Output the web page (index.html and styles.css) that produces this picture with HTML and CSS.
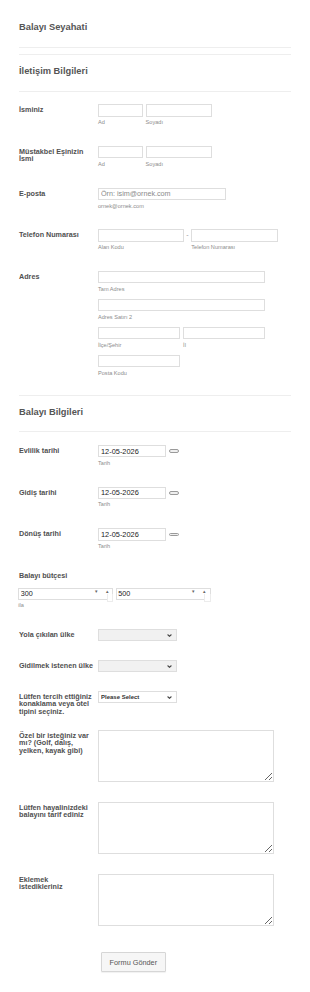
FILE: index.html
```html
<!DOCTYPE html>
<html lang="tr">
<head>
<meta charset="utf-8">
<title>Balayı Seyahati</title>
<link rel="stylesheet" href="styles.css">
</head>
<body>
<form class="form">
  <div class="page-head"><h1 class="title">Balayı Seyahati</h1></div>

  <div class="section-head first"><h2 class="sec-title">İletişim Bilgileri</h2></div>

  <div class="row">
    <label class="lbl">İsminiz</label>
    <div class="fld hrow gap-s">
      <div class="sub w45"><input class="inp" type="text"><span class="sl">Ad</span></div>
      <div class="sub w66"><input class="inp" type="text"><span class="sl">Soyadı</span></div>
    </div>
  </div>

  <div class="row">
    <label class="lbl">Müstakbel Eşinizin<br>İsmi</label>
    <div class="fld hrow gap-s">
      <div class="sub w45"><input class="inp" type="text"><span class="sl">Ad</span></div>
      <div class="sub w66"><input class="inp" type="text"><span class="sl">Soyadı</span></div>
    </div>
  </div>

  <div class="row">
    <label class="lbl">E-posta</label>
    <div class="fld">
      <div class="sub w128"><input class="inp" type="text" placeholder="Örn: isim@ornek.com"><span class="sl">ornek@ornek.com</span></div>
    </div>
  </div>

  <div class="row">
    <label class="lbl">Telefon Numarası</label>
    <div class="fld hrow">
      <div class="sub w86"><input class="inp" type="text"><span class="sl">Alan Kodu</span></div>
      <span class="dash">-</span>
      <div class="sub w86b"><input class="inp" type="text"><span class="sl">Telefon Numarası</span></div>
    </div>
  </div>

  <div class="row">
    <label class="lbl">Adres</label>
    <div class="fld vcol">
      <div class="sub w167"><input class="inp" type="text"><span class="sl">Tam Adres</span></div>
      <div class="sub w167"><input class="inp" type="text"><span class="sl">Adres Satırı 2</span></div>
      <div class="hrow gap-m">
        <div class="sub w82"><input class="inp" type="text"><span class="sl">İlçe/Şehir</span></div>
        <div class="sub w82"><input class="inp" type="text"><span class="sl">İl</span></div>
      </div>
      <div class="sub w82"><input class="inp" type="text"><span class="sl">Posta Kodu</span></div>
    </div>
  </div>

  <div class="section-head second"><h2 class="sec-title">Balayı Bilgileri</h2></div>

  <div class="row">
    <label class="lbl">Evlilik tarihi</label>
    <div class="fld">
      <div class="sub">
        <div class="date"><span class="date-box"><input class="inp val" type="text" value="12-05-2026"></span><span class="pill"></span></div>
        <span class="sl">Tarih</span>
      </div>
    </div>
  </div>

  <div class="row">
    <label class="lbl">Gidiş tarihi</label>
    <div class="fld">
      <div class="sub">
        <div class="date"><span class="date-box"><input class="inp val" type="text" value="12-05-2026"></span><span class="pill"></span></div>
        <span class="sl">Tarih</span>
      </div>
    </div>
  </div>

  <div class="row">
    <label class="lbl">Dönüş tarihi</label>
    <div class="fld">
      <div class="sub">
        <div class="date"><span class="date-box"><input class="inp val" type="text" value="12-05-2026"></span><span class="pill"></span></div>
        <span class="sl">Tarih</span>
      </div>
    </div>
  </div>

  <div class="row stack">
    <label class="lbl top">Balayı bütçesi</label>
    <div class="budget">
      <div class="hrow gap-n">
        <div class="num"><input class="num-in" type="text" value="300"><span class="arr down">▾</span><span class="arr up">▴</span><span class="knob"></span></div>
        <div class="num"><input class="num-in" type="text" value="500"><span class="arr down">▾</span><span class="arr up">▴</span><span class="knob"></span></div>
      </div>
      <span class="sl">ila</span>
    </div>
  </div>

  <div class="row">
    <label class="lbl">Yola çıkılan ülke</label>
    <div class="fld">
      <div class="selw"><select class="sel empty"><option></option></select><svg class="chev" width="5" height="3" viewBox="0 0 5 3"><path d="M0.6 0.5 L2.5 2.3 L4.4 0.5" fill="none" stroke="#444" stroke-width="1.1"/></svg></div>
    </div>
  </div>

  <div class="row">
    <label class="lbl">Gidilmek istenen ülke</label>
    <div class="fld">
      <div class="selw"><select class="sel empty"><option></option></select><svg class="chev" width="5" height="3" viewBox="0 0 5 3"><path d="M0.6 0.5 L2.5 2.3 L4.4 0.5" fill="none" stroke="#444" stroke-width="1.1"/></svg></div>
    </div>
  </div>

  <div class="row">
    <label class="lbl">Lütfen tercih ettiğiniz<br>konaklama veya otel<br>tipini seçiniz.</label>
    <div class="fld">
      <div class="selw"><select class="sel filled"><option>Please Select</option></select><svg class="chev" width="5" height="3" viewBox="0 0 5 3"><path d="M0.6 0.5 L2.5 2.3 L4.4 0.5" fill="none" stroke="#444" stroke-width="1.1"/></svg></div>
    </div>
  </div>

  <div class="row">
    <label class="lbl">Özel bir isteğiniz var<br>mı? (Golf, dalış,<br>yelken, kayak gibi)</label>
    <div class="fld"><textarea class="ta"></textarea></div>
  </div>

  <div class="row">
    <label class="lbl">Lütfen hayalinizdeki<br>balayını tarif ediniz</label>
    <div class="fld"><textarea class="ta"></textarea></div>
  </div>

  <div class="row">
    <label class="lbl">Eklemek<br>istedikleriniz</label>
    <div class="fld"><textarea class="ta"></textarea></div>
  </div>

  <div class="row">
    <span class="lbl"></span>
    <div class="fld"><button class="btn" type="button">Formu Gönder</button></div>
  </div>
</form>
</body>
</html>
```

FILE: styles.css
```css
html, body {
  margin: 0;
  padding: 0;
  background: #fff;
}

body {
  font-family: "Liberation Sans", Arial, sans-serif;
  color: #555;
}

.form {
  width: 310px;
  box-sizing: border-box;
  padding: 0 19px;
}

.page-head {
  padding: 21.5px 0 14.5px;
  border-bottom: 1px solid #eeeeee;
}

.title,
.sec-title {
  margin: 0;
  font-size: 9.3px;
  line-height: 11px;
  font-weight: bold;
  color: #555;
}

.section-head {
  border-top: 1px solid #eeeeee;
  border-bottom: 1px solid #eeeeee;
  padding: 11.2px 0 13.5px;
  margin-bottom: 3px;
}

.section-head.first {
  margin-top: 6px;
}

.section-head.second {
  margin-top: 7.5px;
}

.row {
  display: grid;
  grid-template-columns: 79px auto;
  padding: 9.7px 0;
  align-items: start;
}

.row.stack {
  display: block;
}

.lbl {
  display: block;
  font-size: 7.2px;
  line-height: 7.2px;
  font-weight: bold;
  color: #505050;
  white-space: nowrap;
  padding-top: 2px;
  margin-bottom: -4px;
}

.lbl.top {
  margin-bottom: 0;
}

.fld {
  min-width: 0;
}

.hrow {
  display: flex;
  align-items: flex-start;
}

.gap-s { gap: 2.6px; }
.gap-m { gap: 3.3px; }
.gap-n { gap: 2.4px; }

.vcol {
  display: flex;
  flex-direction: column;
  gap: 5.7px;
}

.sub {
  display: flex;
  flex-direction: column;
}

.w45 { width: 45px; }
.w66 { width: 66px; }
.w128 { width: 128px; }
.w86 { width: 85.7px; }
.w86b { width: 86.4px; }
.w167 { width: 167px; }
.w82 { width: 81.8px; }

.inp {
  display: block;
  width: 100%;
  height: 12.4px;
  box-sizing: border-box;
  margin: 0;
  padding: 0 2px;
  border: 1px solid #dedede;
  border-radius: 0;
  background: #fff;
  font-family: "Liberation Sans", Arial, sans-serif;
  font-size: 7.2px;
  color: #333;
  outline: none;
}

.inp::placeholder {
  color: #8a8a8a;
}

.inp.val {
  font-size: 7.4px;
  color: #222;
}

.sl {
  display: block;
  margin-top: 2.5px;
  font-size: 5.6px;
  line-height: 7.4px;
  color: #8c8c8c;
  white-space: nowrap;
}

.dash {
  width: 7.6px;
  text-align: center;
  font-size: 7px;
  line-height: 12.4px;
  color: #999;
}

.date {
  display: flex;
  align-items: center;
}

.date-box {
  display: block;
  width: 68px;
}

.pill {
  display: block;
  width: 10px;
  height: 3.6px;
  box-sizing: border-box;
  margin-left: 2.6px;
  border: 1px solid #9a9a9a;
  border-radius: 3px;
  background: #efefef;
}

.budget {
  margin-top: 8.7px;
  margin-left: -0.7px;
}

.num {
  position: relative;
  display: flex;
  align-items: center;
  width: 95px;
  height: 12px;
  box-sizing: border-box;
  border: 1px solid #dedede;
  background: #fff;
}

.num-in {
  flex: 1;
  min-width: 0;
  height: 100%;
  box-sizing: border-box;
  margin: 0;
  padding: 0 1.5px;
  border: none;
  background: transparent;
  font-family: "Liberation Sans", Arial, sans-serif;
  font-size: 7.2px;
  color: #222;
  outline: none;
}

.arr {
  position: absolute;
  top: 0.5px;
  font-size: 5px;
  line-height: 5px;
  color: #666;
}

.arr.down {
  right: 14.5px;
}

.arr.up {
  right: 3.5px;
}

.knob {
  position: absolute;
  right: -1px;
  bottom: -3.7px;
  width: 6.5px;
  height: 8px;
  box-sizing: border-box;
  border: 1px solid #ececec;
  border-top: none;
  background: #fff;
}

.selw {
  position: relative;
  width: 78.7px;
}

.sel {
  display: block;
  width: 100%;
  height: 11.7px;
  box-sizing: border-box;
  margin: 0;
  padding: 0 2px;
  -webkit-appearance: none;
  appearance: none;
  border: 1px solid #dedede;
  border-radius: 0;
  font-family: "Liberation Sans", Arial, sans-serif;
  font-size: 6px;
  font-weight: bold;
  color: #333;
  outline: none;
}

.sel.empty {
  background: #f1f1f1;
}

.sel.filled {
  background: #fff;
}

.chev {
  position: absolute;
  right: 4.5px;
  top: 4.5px;
  pointer-events: none;
}

.ta {
  display: block;
  width: 176.3px;
  height: 52.3px;
  box-sizing: border-box;
  margin: 0;
  padding: 2px;
  border: 1px solid #dedede;
  border-radius: 0;
  background: #fff;
  font-family: "Liberation Sans", Arial, sans-serif;
  font-size: 7.2px;
  outline: none;
}

.btn {
  display: block;
  margin: 7.2px 0 0 3px;
  width: 64.7px;
  height: 19.4px;
  box-sizing: border-box;
  padding: 0;
  border: 1px solid #d6d6d6;
  border-radius: 1px;
  background: #f6f6f6;
  box-shadow: 0 1px 1px rgba(0, 0, 0, 0.06);
  font-family: "Liberation Sans", Arial, sans-serif;
  font-size: 7.3px;
  color: #555;
}
```
